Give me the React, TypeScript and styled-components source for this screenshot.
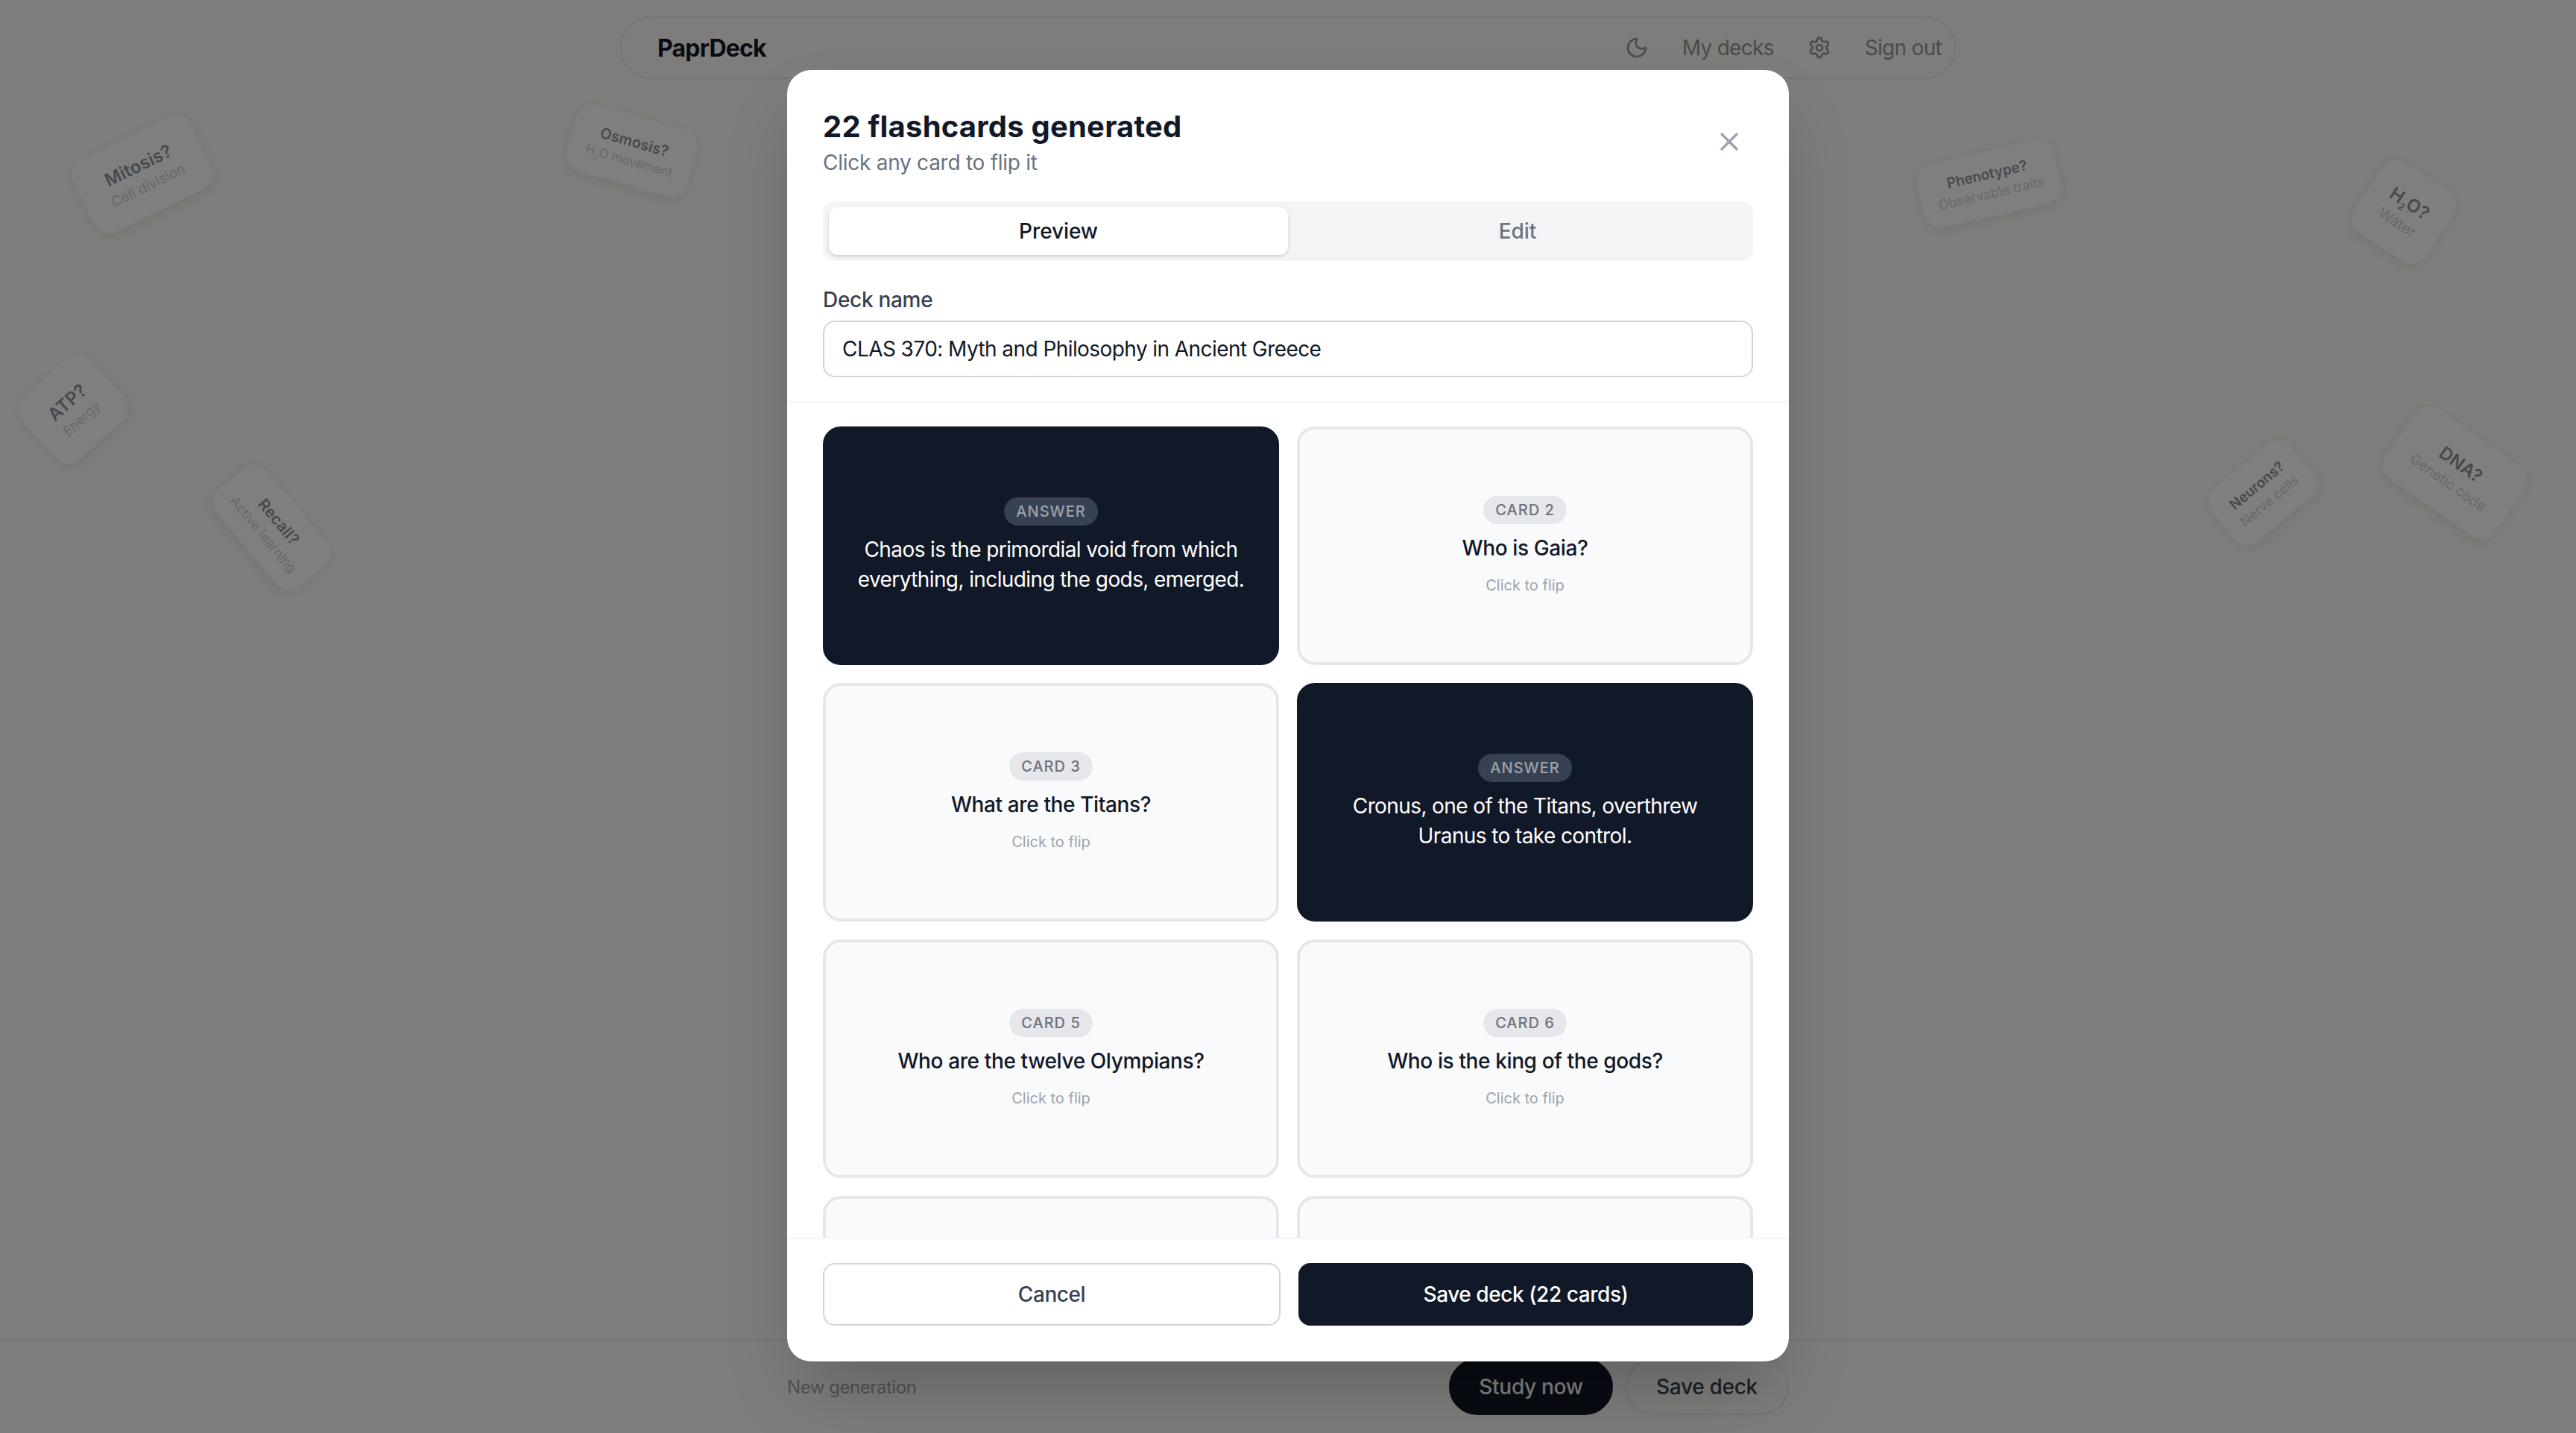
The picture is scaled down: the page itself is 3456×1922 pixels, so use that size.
import React from 'react';
import styled, { createGlobalStyle } from 'styled-components';
import { Moon, Settings, X } from 'lucide-react';

const GlobalStyle = createGlobalStyle`
  html, body {
    margin: 0;
    padding: 0;
    height: 100%;
    overflow: hidden;
    background: #fdfbf6;
    font-family: Inter, "Liberation Sans", sans-serif;
  }
  * { box-sizing: border-box; }
`;

const Page = styled.div`
  position: relative;
  width: 3456px;
  height: 1922px;
  display: flex;
  flex-direction: column;
  overflow: hidden;
`;

const Navbar = styled.nav`
  width: 1792px;
  height: 84px;
  margin: 22px auto 0;
  padding: 0 17px 0 48px;
  display: flex;
  align-items: center;
  justify-content: space-between;
  border: 2px solid #eceade;
  border-radius: 42px;
`;

const Logo = styled.span`
  font-size: 32px;
  font-weight: 700;
  letter-spacing: -0.8px;
  color: #111827;
`;

const NavItems = styled.div`
  display: flex;
  align-items: center;
  gap: 45px;
  color: #98968c;
  font-size: 28px;
  letter-spacing: -0.7px;
`;

const Stage = styled.main`
  flex: 1;
`;

const BottomBar = styled.footer`
  height: 126px;
  border-top: 2px solid #eceade;
  display: flex;
  justify-content: center;
  align-items: center;
`;

const BottomInner = styled.div`
  width: 1344px;
  display: flex;
  align-items: center;
  justify-content: space-between;
`;

const BottomNote = styled.span`
  font-size: 24px;
  letter-spacing: -0.45px;
  color: #9ca3af;
`;

const BottomActions = styled.div`
  display: flex;
  gap: 16px;
`;

const PillButton = styled.button<{ $dark?: boolean }>`
  width: 220px;
  height: 76px;
  border-radius: 38px;
  border: 2px solid ${p => (p.$dark ? '#111827' : '#e5e7eb')};
  background: ${p => (p.$dark ? '#111827' : 'transparent')};
  color: ${p => (p.$dark ? '#ffffff' : '#374151')};
  font: 500 28px Inter, sans-serif;
  letter-spacing: -0.3px;
`;

const FloatCard = styled.div<{ $x: number; $y: number; $w: number; $h: number; $r: number }>`
  position: absolute;
  left: ${p => p.$x - p.$w / 2}px;
  top: ${p => p.$y - p.$h / 2}px;
  width: ${p => p.$w}px;
  height: ${p => p.$h}px;
  transform: rotate(${p => p.$r}deg);
  display: flex;
  flex-direction: column;
  align-items: center;
  justify-content: center;
  gap: 4px;
  border-radius: 24px;
  border: 2px solid rgba(229, 231, 235, 0.35);
  background: #ffffff;
  box-shadow: 0 4px 14px rgba(0, 0, 0, 0.07);
  white-space: nowrap;
`;

const FloatQ = styled.div<{ $s: number }>`
  font-size: ${p => p.$s}px;
  font-weight: 600;
  color: #8f939b;
`;

const FloatA = styled.div<{ $s: number }>`
  font-size: ${p => p.$s}px;
  color: #cfd1d6;
`;

const Overlay = styled.div`
  position: absolute;
  inset: 0;
  padding-bottom: 2px;
  background: rgba(0, 0, 0, 0.5);
  display: flex;
  justify-content: center;
  align-items: center;
`;

const Modal = styled.section`
  position: relative;
  width: 1344px;
  height: 1732px;
  background: #ffffff;
  border-radius: 32px;
  box-shadow: 0 50px 100px -24px rgba(0, 0, 0, 0.25);
  display: flex;
  flex-direction: column;
  overflow: hidden;
`;

const ModalHeader = styled.header`
  padding: 48px 48px 32px;
  border-bottom: 2px solid #f3f4f6;
`;

const TitleRow = styled.div`
  display: flex;
  align-items: center;
  justify-content: space-between;
  height: 96px;
`;

const Title = styled.h2`
  margin: 0;
  font-size: 40px;
  line-height: 56px;
  font-weight: 700;
  letter-spacing: 0.2px;
  color: #111827;
`;

const Subtitle = styled.p`
  margin: 0;
  font-size: 28px;
  line-height: 40px;
  letter-spacing: -0.26px;
  color: #6b7280;
`;

const CloseButton = styled.button`
  border: 0;
  padding: 0;
  margin-right: 12px;
  background: none;
  color: #9ca3af;
  display: flex;
`;

const Tabs = styled.div`
  margin-top: 32px;
  height: 80px;
  padding: 8px;
  display: grid;
  grid-template-columns: 1fr 1fr;
  background: #f3f4f6;
  border-radius: 16px;
`;

const Tab = styled.button<{ $active?: boolean }>`
  border: 0;
  border-radius: 12px;
  font: 500 28px Inter, sans-serif;
  letter-spacing: -0.1px;
  background: ${p => (p.$active ? '#ffffff' : 'transparent')};
  color: ${p => (p.$active ? '#111827' : '#6b7280')};
  box-shadow: ${p => (p.$active ? '0 2px 4px rgba(0,0,0,0.1), 0 2px 6px rgba(0,0,0,0.06)' : 'none')};
`;

const Label = styled.label`
  display: block;
  margin-top: 32px;
  margin-bottom: 8px;
  font-size: 28px;
  line-height: 40px;
  font-weight: 500;
  letter-spacing: -0.3px;
  color: #374151;
`;

const NameInput = styled.input`
  display: block;
  width: 100%;
  height: 76px;
  padding: 0 24px;
  border: 2px solid #d1d5db;
  border-radius: 16px;
  font: 400 28px Inter, sans-serif;
  letter-spacing: -0.57px;
  color: #111827;
  background: #fff;
  outline: none;
`;

const ScrollArea = styled.div`
  flex: 1;
  min-height: 0;
  overflow: hidden;
  padding: 32px 48px;
`;

const CardGrid = styled.div`
  display: grid;
  grid-template-columns: 1fr 1fr;
  grid-auto-rows: 320px;
  gap: 24px;
`;

const FlashCard = styled.div<{ $flipped?: boolean }>`
  display: flex;
  flex-direction: column;
  align-items: center;
  justify-content: center;
  padding: 0 32px;
  text-align: center;
  border-radius: 24px;
  border: 4px solid ${p => (p.$flipped ? '#111827' : '#e5e7eb')};
  background: ${p => (p.$flipped ? '#111827' : '#f9fafb')};
`;

const Badge = styled.span<{ $flipped?: boolean }>`
  height: 38px;
  padding: 0 16px;
  display: flex;
  align-items: center;
  border-radius: 19px;
  font-size: 20px;
  font-weight: 500;
  letter-spacing: 1px;
  background: ${p => (p.$flipped ? '#374151' : '#e5e7eb')};
  color: ${p => (p.$flipped ? '#9ca3af' : '#6b7280')};
`;

const Question = styled.div`
  margin-top: 12px;
  font-size: 28px;
  line-height: 40px;
  font-weight: 500;
  letter-spacing: -0.38px;
  color: #111827;
`;

const Hint = styled.div`
  margin-top: 16px;
  font-size: 20px;
  line-height: 28px;
  color: #9ca3af;
`;

const Answer = styled.div`
  margin-top: 12px;
  font-size: 28px;
  line-height: 40px;
  letter-spacing: -0.6px;
  color: #ffffff;
`;

const ModalFooter = styled.footer`
  height: 166px;
  padding: 32px 48px 48px;
  border-top: 2px solid #f3f4f6;
  display: grid;
  grid-template-columns: 614px 610px;
  gap: 24px;
`;

const FooterButton = styled.button<{ $primary?: boolean }>`
  border-radius: 16px;
  border: 2px solid ${p => (p.$primary ? '#111827' : '#d1d5db')};
  background: ${p => (p.$primary ? '#111827' : '#ffffff')};
  color: ${p => (p.$primary ? '#ffffff' : '#374151')};
  font: 500 28px Inter, sans-serif;
  letter-spacing: -0.44px;
`;

const Sub = styled.sub`
  font-size: 0.55em;
  line-height: 0;
`;

const floaters = [
  { x: 191, y: 233, w: 178, h: 111, r: -26, qs: 24, as: 19, q: 'Mitosis?', a: 'Cell division' },
  { x: 848, y: 201, w: 170, h: 95, r: 16, qs: 20, as: 17, q: 'Osmosis?', a: <>H<Sub>2</Sub>O movement</> },
  { x: 98, y: 548, w: 126, h: 115, r: -42, qs: 24, as: 18, q: 'ATP?', a: 'Energy' },
  { x: 365, y: 707, w: 172, h: 91, r: 50, qs: 21, as: 18, q: 'Recall?', a: 'Active learning' },
  { x: 2668, y: 246, w: 191, h: 90, r: -13, qs: 19, as: 18, q: 'Phenotype?', a: 'Observable traits' },
  { x: 3225, y: 284, w: 117, h: 116, r: 33, qs: 24, as: 20, q: <>H<Sub>2</Sub>O?</>, a: 'Water' },
  { x: 3035, y: 660, w: 141, h: 95, r: -40, qs: 19, as: 18, q: 'Neurons?', a: 'Nerve cells' },
  { x: 3294, y: 633, w: 182, h: 117, r: 35, qs: 24, as: 19, q: 'DNA?', a: 'Genetic code' },
];

type Card = { label?: string; question?: string; answer?: string };

// the last two are cut off by the footer, only their top edge shows
const cards: Card[] = [
  { label: 'ANSWER', answer: 'Chaos is the primordial void from which everything, including the gods, emerged.' },
  { label: 'CARD 2', question: 'Who is Gaia?' },
  { label: 'CARD 3', question: 'What are the Titans?' },
  { label: 'ANSWER', answer: 'Cronus, one of the Titans, overthrew Uranus to take control.' },
  { label: 'CARD 5', question: 'Who are the twelve Olympians?' },
  { label: 'CARD 6', question: 'Who is the king of the gods?' },
  {},
  {},
];

const App: React.FC = () => {
  return (
    <>
      <GlobalStyle />
      <Page>
        <Navbar>
          <Logo>PaprDeck</Logo>
          <NavItems>
            <Moon size={32} strokeWidth={2} />
            <span>My decks</span>
            <Settings size={32} strokeWidth={2} />
            <span>Sign out</span>
          </NavItems>
        </Navbar>
        <Stage>
          {floaters.map((f, i) => (
            <FloatCard key={i} $x={f.x} $y={f.y} $w={f.w} $h={f.h} $r={f.r}>
              <FloatQ $s={f.qs}>{f.q}</FloatQ>
              <FloatA $s={f.as}>{f.a}</FloatA>
            </FloatCard>
          ))}
        </Stage>
        <BottomBar>
          <BottomInner>
            <BottomNote>New generation</BottomNote>
            <BottomActions>
              <PillButton $dark>Study now</PillButton>
              <PillButton>Save deck</PillButton>
            </BottomActions>
          </BottomInner>
        </BottomBar>
        <Overlay>
          <Modal>
            <ModalHeader>
              <TitleRow>
                <div>
                  <Title>22 flashcards generated</Title>
                  <Subtitle>Click any card to flip it</Subtitle>
                </div>
                <CloseButton><X size={40} strokeWidth={2} /></CloseButton>
              </TitleRow>
              <Tabs>
                <Tab $active>Preview</Tab>
                <Tab>Edit</Tab>
              </Tabs>
              <Label>Deck name</Label>
              <NameInput readOnly value="CLAS 370: Myth and Philosophy in Ancient Greece" />
            </ModalHeader>
            <ScrollArea>
              <CardGrid>
                {cards.map((c, i) => {
                  if (c.answer) {
                    return (
                      <FlashCard key={i} $flipped>
                        <Badge $flipped>{c.label}</Badge>
                        <Answer>{c.answer}</Answer>
                      </FlashCard>
                    );
                  }
                  if (c.question) {
                    return (
                      <FlashCard key={i}>
                        <Badge>{c.label}</Badge>
                        <Question>{c.question}</Question>
                        <Hint>Click to flip</Hint>
                      </FlashCard>
                    );
                  }
                  return <FlashCard key={i} />;
                })}
              </CardGrid>
            </ScrollArea>
            <ModalFooter>
              <FooterButton>Cancel</FooterButton>
              <FooterButton $primary>Save deck (22 cards)</FooterButton>
            </ModalFooter>
          </Modal>
        </Overlay>
      </Page>
    </>
  );
};

export default App;
